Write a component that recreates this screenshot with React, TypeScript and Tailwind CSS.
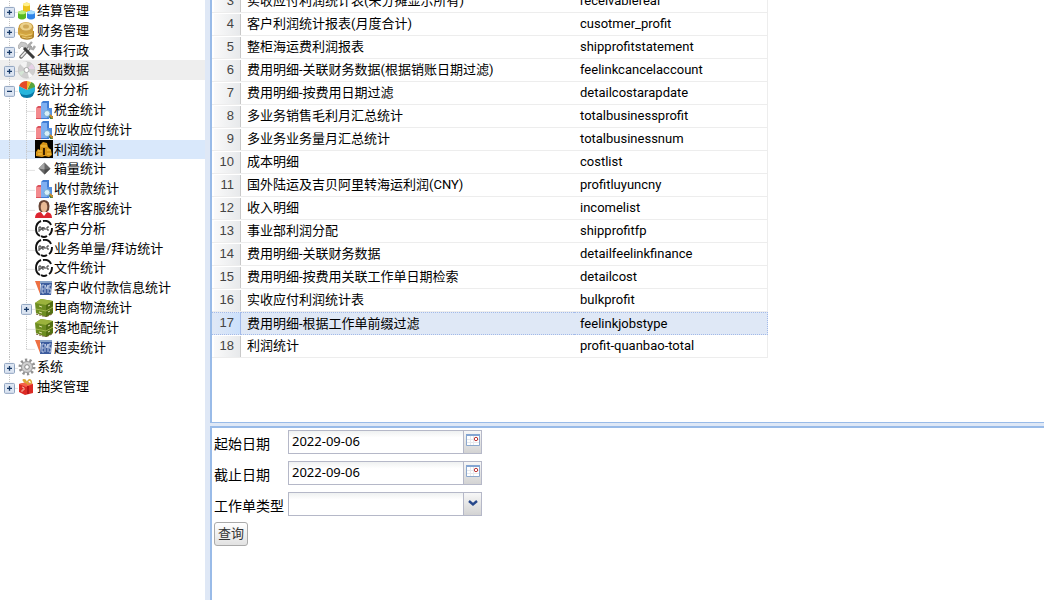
import React from "react";

type IconKind = "cubes" | "coins" | "tools" | "disc" | "pie" | "bars" | "gold" | "diamond" | "person" | "ring" | "ems" | "crate" | "gear" | "gift";
type Item = { label: string; icon: IconKind; level: 0 | 1; toggle?: "+" | "-"; last?: boolean; tone?: "hover" | "selected" };

const items: Item[] = [
  { label: "结算管理", icon: "cubes", level: 0, toggle: "+" },
  { label: "财务管理", icon: "coins", level: 0, toggle: "+" },
  { label: "人事行政", icon: "tools", level: 0, toggle: "+" },
  { label: "基础数据", icon: "disc", level: 0, toggle: "+", tone: "hover" },
  { label: "统计分析", icon: "pie", level: 0, toggle: "-" },
  { label: "税金统计", icon: "bars", level: 1 },
  { label: "应收应付统计", icon: "bars", level: 1 },
  { label: "利润统计", icon: "gold", level: 1, tone: "selected" },
  { label: "箱量统计", icon: "diamond", level: 1 },
  { label: "收付款统计", icon: "bars", level: 1 },
  { label: "操作客服统计", icon: "person", level: 1 },
  { label: "客户分析", icon: "ring", level: 1 },
  { label: "业务单量/拜访统计", icon: "ring", level: 1 },
  { label: "文件统计", icon: "ring", level: 1 },
  { label: "客户收付款信息统计", icon: "ems", level: 1 },
  { label: "电商物流统计", icon: "crate", level: 1, toggle: "+" },
  { label: "落地配统计", icon: "crate", level: 1 },
  { label: "超卖统计", icon: "ems", level: 1, last: true },
  { label: "系统", icon: "gear", level: 0, toggle: "+" },
  { label: "抽奖管理", icon: "gift", level: 0, toggle: "+", last: true },
];

const rows: [number, string, string][] = [
  [3, "实收应付利润统计表(未分摊显示所有)", "receivablereal"],
  [4, "客户利润统计报表(月度合计)", "cusotmer_profit"],
  [5, "整柜海运费利润报表", "shipprofitstatement"],
  [6, "费用明细-关联财务数据(根据销账日期过滤)", "feelinkcancelaccount"],
  [7, "费用明细-按费用日期过滤", "detailcostarapdate"],
  [8, "多业务销售毛利月汇总统计", "totalbusinessprofit"],
  [9, "多业务业务量月汇总统计", "totalbusinessnum"],
  [10, "成本明细", "costlist"],
  [11, "国外陆运及吉贝阿里转海运利润(CNY)", "profitluyuncny"],
  [12, "收入明细", "incomelist"],
  [13, "事业部利润分配", "shipprofitfp"],
  [14, "费用明细-关联财务数据", "detailfeelinkfinance"],
  [15, "费用明细-按费用关联工作单日期检索", "detailcost"],
  [16, "实收应付利润统计表", "bulkprofit"],
  [17, "费用明细-根据工作单前缀过滤", "feelinkjobstype"],
  [18, "利润统计", "profit-quanbao-total"],
];

const drawings: Record<IconKind, React.ReactNode> = {
  cubes: (
    <>
      <path d="M5 2q4-3 7 0v7q-3 2-7 0z" fill="#efc31c" /><ellipse cx="8.500" cy="2.500" rx="3.500" ry="1.700" fill="#fff08b" />
      <path d="M0 10q4-3 8 0v6q-4 3-8 0z" fill="#58b923" /><ellipse cx="4" cy="10.500" rx="4" ry="1.800" fill="#b8f07b" />
      <path d="M9 10q4-3 8 0v6q-4 3-8 0z" fill="#3185e8" /><ellipse cx="13" cy="10.500" rx="4" ry="1.800" fill="#a6dcff" />
    </>
  ),
  coins: (
    <>
      <path d="M2 9v6c2 3.500 12 3.500 14 0V9z" fill="#b1852c" /><path d="M0 6v6c2 4 13 4 15 0V6z" fill="#d3a640" />
      <ellipse cx="8" cy="5.500" rx="7.500" ry="5.500" fill="#cda043" /><ellipse cx="8" cy="4.500" rx="6" ry="4" fill="#ecd28b" /><ellipse cx="8" cy="4.500" rx="3" ry="2" fill="#d0aa58" /><path d="M2 12q6 3 12 0M4 15q5 2 10 0" stroke="#eccb73" fill="none" />
    </>
  ),
  tools: (
    <>
      <path d="M3 16L12 6" stroke="#777" strokeWidth="3.500" strokeLinecap="round" /><path d="M3 16L12 6" stroke="#eee" strokeWidth="1.800" />
      <path d="M0 5l3-4 5 1 2 3-3 3-3-3-3 3z" fill="#c8c8c8" stroke="#999" strokeWidth=".6" /><path d="M6 7l10 10" stroke="#3b3b3b" strokeWidth="3" /><path d="M14 1l-3 3 1 3 3 1 2-3" stroke="#aaa" strokeWidth="2.400" fill="none" />
    </>
  ),
  disc: (
    <>
      <circle cx="8.500" cy="9" r="8.300" fill="#cfcfcf" stroke="#bbb" strokeWidth=".5" /><path d="M8 9L2 3Q5 0 9 1z" fill="#f3f3f3" /><path d="M9 9l6 6-4 2z" fill="#fafafa" /><path d="M9 8l5-5 3 5z" fill="#e7d2e7" /><path d="M8 9l-7 2 2 4z" fill="#d4e5d5" /><circle cx="8.500" cy="9" r="2.500" fill="#fff" stroke="#aaa" />
    </>
  ),
  pie: (
    <>
      <path d="M1 7q0 10 8 10t8-10l-8 3z" fill="#0878a6" /><path d="M1 5l8 4 8-4q1 8-8 9T1 5z" fill="#26b5dc" /><path d="M9 9L1 5q2-5 8-5z" fill="#e64b28" /><path d="M9 9l4-8q4 1 4 5z" fill="#58a43b" /><path d="M9 9V0l4 1z" fill="#f3b229" />
    </>
  ),
  bars: (
    <>
      <path d="M1 7l2-2h5v13H1z" fill="#d9535d" /><path d="M1 7h5v10H1z" fill="#f38a8e" /><path d="M6 2l2-2h6v18H6z" fill="#427ed5" /><path d="M6 2h6v15H6z" fill="#80aff0" /><path d="M12 7h5v10h-5z" fill="#5790df" /><circle cx="12" cy="12.500" r="3" fill="#d8f0f8" stroke="#78add3" /><path d="M14 15h4v3h-3z" fill="#4d8440" /><path d="M15 14l3 3" stroke="#d28c2b" strokeWidth="1.800" />
    </>
  ),
  gold: (
    <>
      <path d="M0 0h18v18H0z" fill="#060400" /><path d="M1 12l2-3 2 1V5l3-3 4 1 1 4 3 3 1 5-3 2-4-1-3 1-6-1z" fill="#d79416" /><path d="M3 11h4M6 6h6M12 10h4M3 14h4M12 14h4" stroke="#f5c64a" /><path d="M9 8v7" stroke="#392000" strokeWidth="2" />
    </>
  ),
  diamond: (<><path d="M9.500 2.500l6 6-6 6-6-6z" fill="#686868" /><path d="M9.500 2.500l-6 6 6 1z" fill="#a5a5a5" /><path d="M9.500 9.500l6-1-6 6z" fill="#4b4b4b" /></>),
  person: (
    <>
      <path d="M0 18q0-6 6-6h5q6 0 6 6z" fill="#dc2530" /><path d="M5 11l4 5 4-5" fill="#fff" /><path d="M4 10Q2 0 9 0t5 10l-2 2H6z" fill="#674334" /><ellipse cx="9" cy="7" rx="3.300" ry="5.300" fill="#e8b994" />
    </>
  ),
  ring: (
    <>
      <circle cx="9" cy="9" r="8" fill="#fff" /><path d="M6 1Q1 3 1 9q0 5 4 7M8 1q6-1 8 4M17 8q0 5-3 7M12 16q-3 2-6 0" fill="none" stroke="#111" strokeWidth="1.900" /><path d="M4 12V7h2v3H4M7 10V8h3v2M8 7v4M14 7h-2v3h2" fill="none" stroke="#333" />
    </>
  ),
  ems: (
    <>
      <path d="M1 2h16v3H1z" fill="#8ba5c9" /><path d="M0 2h5v13z" fill="#ed7043" /><path d="M6 4h11l-1 12H5z" fill="#3c5c9e" /><path d="M9 6H7v8h2M7 10h2M10 14V6l2 4 1-4v8M16 6h-2v4h2v4h-2" stroke="#d8e2f4" strokeWidth=".8" fill="none" />
    </>
  ),
  crate: (
    <>
      <path d="M0 4l6-4 12 2v12l-7 4-10-4z" fill="#6d8d21" /><path d="M0 4l6-4 12 2-7 4z" fill="#9bb33c" /><path d="M11 6l7-4v12l-7 4z" fill="#547013" /><path d="M1 10l10 2 7-4" stroke="#a1b54c" fill="none" /><path d="M4 7l3 1M4 13l3 1M13 7l2-1M13 13l2-1" stroke="#dddca6" fill="none" /><path d="M1 15l10 3 6-3" stroke="#6f552b" strokeDasharray="2 1" fill="none" />
    </>
  ),
  gear: (<><circle cx="9" cy="9" r="7" fill="none" stroke="#929292" strokeWidth="3" strokeDasharray="2.200 2.200" /><circle cx="9" cy="9" r="5.500" fill="#d0d0d0" stroke="#999" /><circle cx="9" cy="9" r="2.300" fill="#fff" stroke="#888" /></>),
  gift: (<><path d="M1 6l8-2 6 2v9l-8 2-6-3z" fill="#dc2a24" /><path d="M1 6l8-2 6 2-7 3z" fill="#f4614a" /><path d="M10 8v8" stroke="#b91619" strokeWidth="2" /><path d="M4 9q3 0 2 3-3-1-2 2" stroke="#f6b3a0" fill="none" /><path d="M8 5Q3 1 7 2l2 3q2-5 4-2t-4 3" stroke="#dba532" strokeWidth="1.500" fill="none" /></>),
};

function Icon({ kind }: { kind: IconKind }) {
  return <svg aria-hidden="true" viewBox="0 0 18 18" className="size-[18px] shrink-0">{drawings[kind]}</svg>;
}

function Branch({ item }: { item: Item }) {
  const line = item.last ? "M5.500 0v11" : "M5.500 0v20";
  return (
    <svg aria-hidden="true" viewBox="0 0 14 20" preserveAspectRatio="none" className="h-full w-[14px] shrink-0">
      <path d={`${line}M5.500 11.500H14`} fill="none" stroke="#c4c4c4" strokeDasharray="1 1" />
      {item.toggle && (
        <>
          <rect x=".5" y="6.500" width="10" height="10" rx="1" fill="#dce5f2" stroke="#8fa3bf" />
          <path d={item.toggle === "+" ? "M3 11.500h5M5.500 9v5" : "M3 11.500h5"} stroke="#173966" strokeWidth="1.300" />
        </>
      )}
    </svg>
  );
}

function TreeRow({ item }: { item: Item }) {
  const tone = item.tone === "selected" ? "bg-[#d9e8fb]" : item.tone === "hover" ? "bg-[#eeeeee]" : "";
  return (
    <li className={`flex min-h-0 ${tone}`}>
      <button type="button" className="flex w-full items-center pl-1 text-left whitespace-nowrap">
        {item.level === 1 && <span className="mr-[11px] ml-[5px] h-full border-l border-dotted border-[#c0c0c0]" />}
        <Branch item={item} />
        <Icon kind={item.icon} />
        <span className="ml-px">{item.label}</span>
      </button>
    </li>
  );
}

function CalendarIcon() {
  return (
    <svg aria-hidden="true" viewBox="0 0 14 14" className="size-[14px]">
      <path d="M.5 1.500h13v11H.5z" fill="#fff" stroke="#8ba7cd" /><path d="M0 1h14v2H0z" fill="#84a5d2" /><path d="M1 6.500h12M1 9.500h12M4.500 3v9M7.500 3v9" stroke="#e6e9ee" /><circle cx="10" cy="6" r="1.700" fill="#fff" stroke="#b33" />
    </svg>
  );
}

const fieldBox = "flex h-6 w-[194px] border border-[#b5b8c8] bg-linear-to-b from-[#eff1f1] to-white to-30%";
const trigger = "flex w-[18px] shrink-0 justify-center border-l border-[#b5b8c8] bg-linear-to-b from-[#f7f7f7] to-[#d3d3d3]";
const fieldLabel = "w-[74px] shrink-0 pt-1 text-sm leading-5 whitespace-nowrap";

function DateField({ id, label }: { id: string; label: string }) {
  return (
    <div className="flex h-[25px] items-center">
      <label htmlFor={id} className={fieldLabel}>{label}</label>
      <div className={fieldBox}>
        <input id={id} defaultValue="2022-09-06" className="min-w-0 flex-1 bg-transparent px-[3px] font-['Noto_Sans',sans-serif] text-[13px] outline-none" />
        <button type="button" aria-label={`选择${label}`} className={`${trigger} pt-[2px]`}><CalendarIcon /></button>
      </div>
    </div>
  );
}

export default function App() {
  return (
    <div className="flex h-screen overflow-hidden bg-white font-[Roboto,'Noto_Sans_CJK_SC',sans-serif] text-black">
      <nav className="w-[205px] shrink-0 overflow-hidden pt-px text-[13px] leading-5">
        <ul className="grid h-[396px] auto-rows-fr">
          {items.map((item) => <TreeRow key={item.label + item.icon} item={item} />)}
        </ul>
      </nav>
      <div className="w-[5px] shrink-0 bg-[#dfe8f6]" />
      <main className="flex min-w-0 flex-1 flex-col">
        <section className="h-[423px] shrink-0 overflow-hidden border-b border-l-2 border-[#99bbe8]">
          <table className="-mt-[10px] w-[556px] table-fixed border-separate border-spacing-0 text-[13px] leading-5">
            <colgroup><col className="w-[29px]" /><col className="w-[333px]" /><col /></colgroup>
            <tbody>
              {rows.map(([number, name, code]) => {
                const selected = number === 17;
                const cell = selected ? "border-y border-dotted border-[#a3bae9] bg-[#dfe8f6]" : "border-b border-[#ededed]";
                return (
                  <tr key={number} className="h-[23px]">
                    <td className={`p-0 pl-[2px] ${cell}`}>
                      <div className={`h-[21px] border-r pr-[6px] text-right font-['Liberation_Sans',sans-serif] text-[#444] ${selected ? "border-[#a3bae9] bg-linear-to-r from-[#dfe8f6] to-[#cbe0fb]" : "border-[#c8c8c8] bg-linear-to-r from-[#fafafa] to-[#e7e9eb]"}`}>{number}</div>
                    </td>
                    <td className={`truncate p-0 pl-[6px] ${cell}`}>{name}</td>
                    <td className={`truncate border-r p-0 pl-[6px] ${cell}`}>{code}</td>
                  </tr>
                );
              })}
            </tbody>
          </table>
        </section>
        <div className="h-[3px] shrink-0 bg-[#dfe8f6]" />
        <section className="flex-1 border-t-2 border-l-2 border-[#99bbe8]">
          <form className="flex flex-col items-start gap-[6px] px-0.5 pt-px">
            <DateField id="start" label="起始日期" />
            <DateField id="end" label="截止日期" />
            <div className="flex h-[25px] items-center">
              <label htmlFor="kind" className={fieldLabel}>工作单类型</label>
              <div className={fieldBox}>
                <select id="kind" defaultValue="" className="min-w-0 flex-1 appearance-none bg-transparent outline-none"><option value="" /></select>
                <span className={`${trigger} pointer-events-none pt-[7px]`}>
                  <svg aria-hidden="true" viewBox="0 0 10 7" className="h-[7px] w-[10px]"><path d="M1 1l4 3.500L9 1" fill="none" stroke="#26478b" strokeWidth="2.400" /></svg>
                </span>
              </div>
            </div>
            <button type="button" className="h-6 rounded-[3px] border border-[#aaa] bg-linear-to-b from-white to-[#e2e2e2] px-[3px] text-[13px] leading-5 text-[#333]">查询</button>
          </form>
        </section>
      </main>
    </div>
  );
}
